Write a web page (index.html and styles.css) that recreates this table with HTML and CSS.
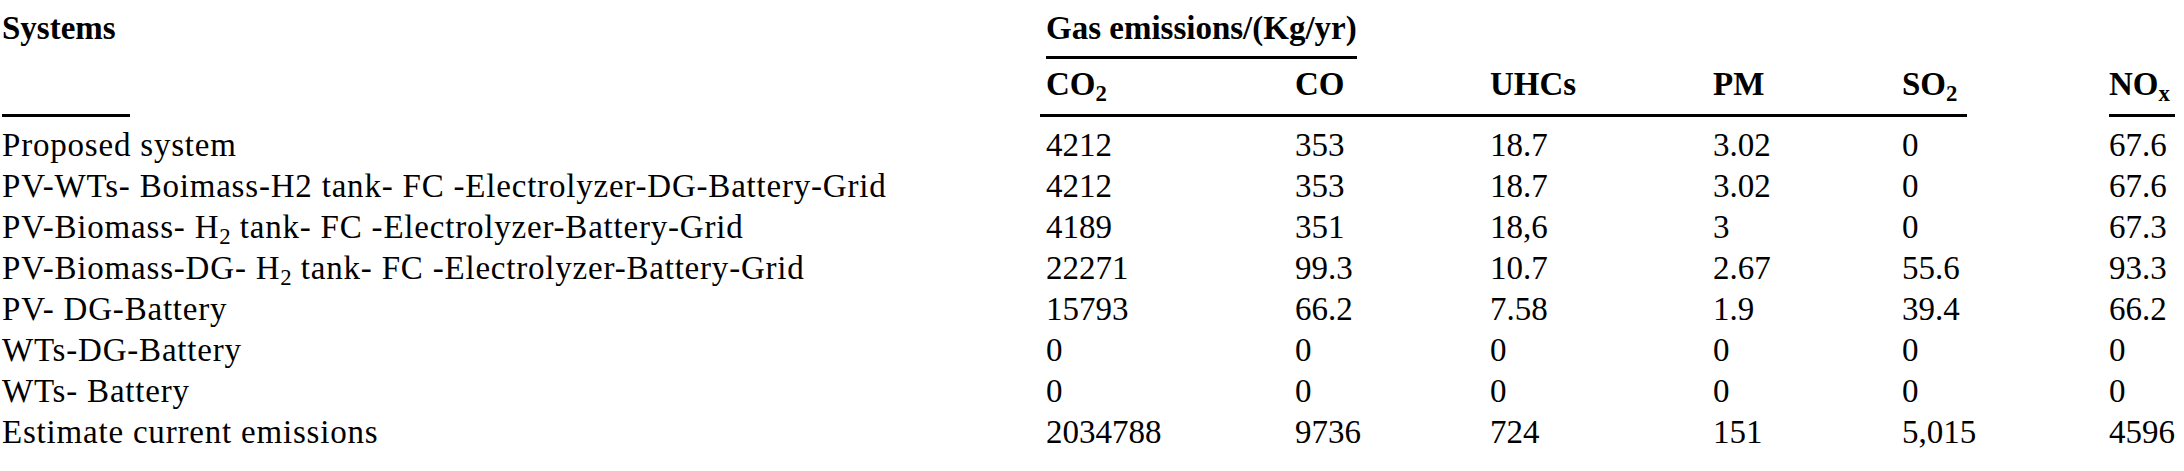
FILE: index.html
```html
<!DOCTYPE html>
<html lang="en">
<head>
<meta charset="utf-8">
<title>Gas emissions</title>
<link rel="stylesheet" href="styles.css">
</head>
<body>
<div class="table">
  <div class="cell head systems">Systems</div>
  <div class="cell head gas">Gas emissions/(Kg/yr)</div>

  <div class="cell head sub-head rule first">CO<sub>2</sub></div>
  <div class="cell head sub-head rule">CO</div>
  <div class="cell head sub-head rule">UHCs</div>
  <div class="cell head sub-head rule">PM</div>
  <div class="cell head sub-head rule short">SO<sub>2</sub></div>
  <div class="cell head sub-head rule nox">NO<sub>x</sub></div>

  <div class="row top">
    <div class="cell name">Proposed system</div>
    <div class="cell">4212</div><div class="cell">353</div><div class="cell">18.7</div><div class="cell">3.02</div><div class="cell">0</div><div class="cell">67.6</div>
  </div>
  <div class="row">
    <div class="cell name">PV-WTs- Boimass-H2 tank- FC -Electrolyzer-DG-Battery-Grid</div>
    <div class="cell">4212</div><div class="cell">353</div><div class="cell">18.7</div><div class="cell">3.02</div><div class="cell">0</div><div class="cell">67.6</div>
  </div>
  <div class="row">
    <div class="cell name">PV-Biomass- H<sub>2</sub> tank- FC -Electrolyzer-Battery-Grid</div>
    <div class="cell">4189</div><div class="cell">351</div><div class="cell">18,6</div><div class="cell">3</div><div class="cell">0</div><div class="cell">67.3</div>
  </div>
  <div class="row">
    <div class="cell name">PV-Biomass-DG- H<sub>2</sub> tank- FC -Electrolyzer-Battery-Grid</div>
    <div class="cell">22271</div><div class="cell">99.3</div><div class="cell">10.7</div><div class="cell">2.67</div><div class="cell">55.6</div><div class="cell">93.3</div>
  </div>
  <div class="row">
    <div class="cell name">PV- DG-Battery</div>
    <div class="cell">15793</div><div class="cell">66.2</div><div class="cell">7.58</div><div class="cell">1.9</div><div class="cell">39.4</div><div class="cell">66.2</div>
  </div>
  <div class="row">
    <div class="cell name">WTs-DG-Battery</div>
    <div class="cell">0</div><div class="cell">0</div><div class="cell">0</div><div class="cell">0</div><div class="cell">0</div><div class="cell">0</div>
  </div>
  <div class="row">
    <div class="cell name">WTs- Battery</div>
    <div class="cell">0</div><div class="cell">0</div><div class="cell">0</div><div class="cell">0</div><div class="cell">0</div><div class="cell">0</div>
  </div>
  <div class="row">
    <div class="cell name">Estimate current emissions</div>
    <div class="cell">2034788</div><div class="cell">9736</div><div class="cell">724</div><div class="cell">151</div><div class="cell">5,015</div><div class="cell">4596</div>
  </div>
</div>
</body>
</html>
```

FILE: styles.css
```css
html, body {
  margin: 0;
  padding: 0;
  background: #ffffff;
}

body {
  font-family: "Liberation Serif", "Times New Roman", serif;
  font-size: 33px;
  color: #000000;
}

.table {
  display: grid;
  grid-template-columns: 1044px 249px 195px 223px 189px 207px 1fr;
  padding-left: 2px;
}

.row {
  display: contents;
}

.cell {
  line-height: 41px;
  white-space: nowrap;
}

.head {
  font-weight: bold;
}

.systems {
  grid-column: 1;
  grid-row: 1 / 3;
  padding-top: 8px;
  width: 128px;
  border-bottom: 3px solid #000;
  box-sizing: border-box;
}

.gas {
  grid-column: 2 / 7;
  grid-row: 1;
  justify-self: start;
  padding-top: 8px;
  padding-bottom: 7px;
  border-bottom: 3px solid #000;
}

.sub-head {
  grid-row: 2;
  padding-top: 5px;
  padding-bottom: 9px;
}

.rule {
  border-bottom: 3px solid #000;
}

.first {
  margin-left: -6px;
  padding-left: 6px;
}

.short {
  justify-self: start;
  width: 65px;
}

.nox {
  justify-self: start;
  width: 66px;
}

.name {
  grid-column: 1;
  letter-spacing: 0.8px;
}

.row.top .cell {
  padding-top: 8px;
}

sub {
  font-size: 0.69em;
  line-height: 0;
  vertical-align: -0.25em;
  letter-spacing: 0;
}
```
